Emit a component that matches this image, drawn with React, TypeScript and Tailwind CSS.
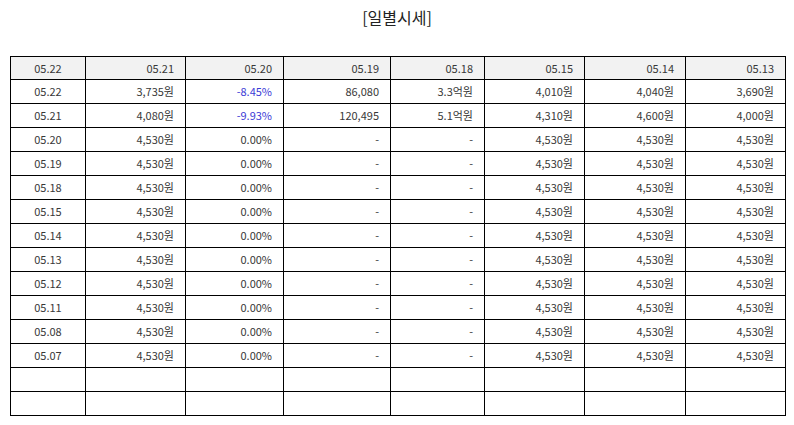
import React from 'react';

const headers = ['05.22', '05.21', '05.20', '05.19', '05.18', '05.15', '05.14', '05.13'];
const widths = ['w-[75px]', 'w-[100px]', 'w-[98px]', 'w-[107px]', 'w-[94px]', 'w-[100px]', 'w-[101px]', 'w-[100px]'];

type Row = { date: string; price: string; rate: string; vol: string; amt: string; a: string; b: string; c: string; blue?: boolean };

const flat = ['05.20', '05.19', '05.18', '05.15', '05.14', '05.13', '05.12', '05.11', '05.08', '05.07'];

const rows: Row[] = [
  { date: '05.22', price: '3,735원', rate: '-8.45%', vol: '86,080', amt: '3.3억원', a: '4,010원', b: '4,040원', c: '3,690원', blue: true },
  { date: '05.21', price: '4,080원', rate: '-9.93%', vol: '120,495', amt: '5.1억원', a: '4,310원', b: '4,600원', c: '4,000원', blue: true },
  ...flat.map((d) => ({ date: d, price: '4,530원', rate: '0.00%', vol: '-', amt: '-', a: '4,530원', b: '4,530원', c: '4,530원' })),
];

const cell = 'border border-black h-[24px] px-[11px] text-right';

export default function App() {
  return (
    <div className="w-[794px] h-[425px] bg-white text-[#383838] font-['Noto_Sans_CJK_KR','Noto_Sans',sans-serif]">
      <h1 className="text-center text-[16px] text-[#222] pt-[5px] h-[56px]">[일별시세]</h1>
      <table className="ml-[10px] border-collapse table-fixed text-[11px] w-[775px]">
        <thead>
          <tr className="bg-[#f2f2f2]">
            {headers.map((h, i) => (
              <th key={h} className={`${widths[i]} border border-black h-[23px] px-[11px] font-normal ${i === 0 ? 'text-center' : 'text-right'}`}>
                {h}
              </th>
            ))}
          </tr>
        </thead>
        <tbody>
          {rows.map((r) => (
            <tr key={r.date}>
              <td className="border border-black h-[24px] text-center">{r.date}</td>
              <td className={cell}>{r.price}</td>
              <td className={`${cell} ${r.blue ? 'text-[#3b3bd6]' : ''}`}>{r.rate}</td>
              <td className={cell}>{r.vol}</td>
              <td className={cell}>{r.amt}</td>
              <td className={cell}>{r.a}</td>
              <td className={cell}>{r.b}</td>
              <td className={cell}>{r.c}</td>
            </tr>
          ))}
          {[0, 1].map((k) => (
            <tr key={'e' + k}>
              {headers.map((h) => (
                <td key={h} className="border border-black h-[24px]"></td>
              ))}
            </tr>
          ))}
        </tbody>
      </table>
    </div>
  );
}
